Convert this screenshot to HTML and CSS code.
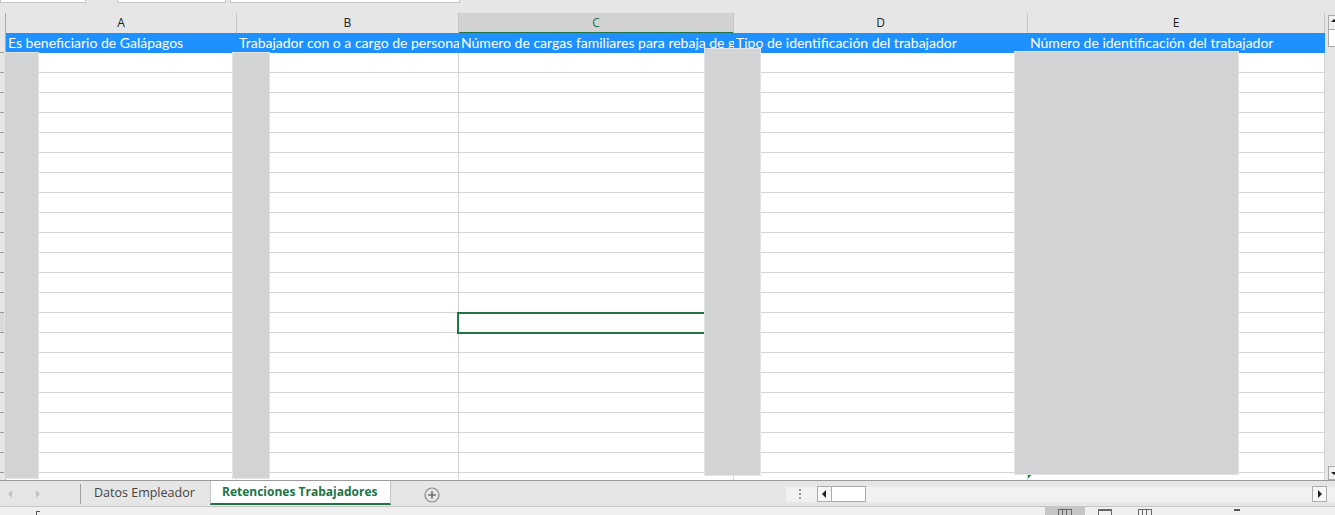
FILE: index.html
```html
<!DOCTYPE html>
<html lang="es">
<head>
<meta charset="utf-8">
<title>Retenciones Trabajadores</title>
<link rel="stylesheet" href="styles.css">
</head>
<body>
<div class="top">
  <span class="tb tb1"></span><span class="tb tb2"></span><span class="tb tb3"></span>
</div>
<div class="main">
  <div class="sheet">
    <div class="row hrow">
      <div class="corner"></div>
      <div class="ch">A</div>
      <div class="ch">B</div>
      <div class="ch sel">C</div>
      <div class="ch">D</div>
      <div class="ch">E</div>
    </div>
    <div class="row blue">
      <div class="rh"></div>
      <div class="c">Es beneficiario de Galápagos</div>
      <div class="c">Trabajador con o a cargo de persona con discapacidad</div>
      <div class="c">Número de cargas familiares para rebaja de gastos personales</div>
      <div class="c">Tipo de identificación del trabajador</div>
      <div class="c">Número de identificación del trabajador</div>
    </div>
    <div class="row"><div class="rh"></div><div class="c"></div><div class="c"></div><div class="c"></div><div class="c"></div><div class="c"></div></div>
    <div class="row"><div class="rh"></div><div class="c"></div><div class="c"></div><div class="c"></div><div class="c"></div><div class="c"></div></div>
    <div class="row"><div class="rh"></div><div class="c"></div><div class="c"></div><div class="c"></div><div class="c"></div><div class="c"></div></div>
    <div class="row"><div class="rh"></div><div class="c"></div><div class="c"></div><div class="c"></div><div class="c"></div><div class="c"></div></div>
    <div class="row"><div class="rh"></div><div class="c"></div><div class="c"></div><div class="c"></div><div class="c"></div><div class="c"></div></div>
    <div class="row"><div class="rh"></div><div class="c"></div><div class="c"></div><div class="c"></div><div class="c"></div><div class="c"></div></div>
    <div class="row"><div class="rh"></div><div class="c"></div><div class="c"></div><div class="c"></div><div class="c"></div><div class="c"></div></div>
    <div class="row"><div class="rh"></div><div class="c"></div><div class="c"></div><div class="c"></div><div class="c"></div><div class="c"></div></div>
    <div class="row"><div class="rh"></div><div class="c"></div><div class="c"></div><div class="c"></div><div class="c"></div><div class="c"></div></div>
    <div class="row"><div class="rh"></div><div class="c"></div><div class="c"></div><div class="c"></div><div class="c"></div><div class="c"></div></div>
    <div class="row"><div class="rh"></div><div class="c"></div><div class="c"></div><div class="c"></div><div class="c"></div><div class="c"></div></div>
    <div class="row"><div class="rh"></div><div class="c"></div><div class="c"></div><div class="c"></div><div class="c"></div><div class="c"></div></div>
    <div class="row"><div class="rh"></div><div class="c"></div><div class="c"></div><div class="c"></div><div class="c"></div><div class="c"></div></div>
    <div class="row"><div class="rh rsel"></div><div class="c"></div><div class="c"></div><div class="c"></div><div class="c"></div><div class="c"></div></div>
    <div class="row"><div class="rh"></div><div class="c"></div><div class="c"></div><div class="c"></div><div class="c"></div><div class="c"></div></div>
    <div class="row"><div class="rh"></div><div class="c"></div><div class="c"></div><div class="c"></div><div class="c"></div><div class="c"></div></div>
    <div class="row"><div class="rh"></div><div class="c"></div><div class="c"></div><div class="c"></div><div class="c"></div><div class="c"></div></div>
    <div class="row"><div class="rh"></div><div class="c"></div><div class="c"></div><div class="c"></div><div class="c"></div><div class="c"></div></div>
    <div class="row"><div class="rh"></div><div class="c"></div><div class="c"></div><div class="c"></div><div class="c"></div><div class="c"></div></div>
    <div class="row"><div class="rh"></div><div class="c"></div><div class="c"></div><div class="c"></div><div class="c"></div><div class="c"></div></div>
    <div class="row"><div class="rh"></div><div class="c"></div><div class="c"></div><div class="c"></div><div class="c"></div><div class="c"></div></div>
    <div class="row data">
      <div class="rh"></div>
      <div class="c">NO</div>
      <div class="c">SI</div>
      <div class="c num">0</div>
      <div class="c">C</div>
      <div class="c txtnum">0999994071</div>
    </div>
  </div>
  <div class="vscroll">
    <div class="vbtn up"></div>
    <div class="vthumb"></div>
    <div class="vspace"></div>
    <div class="vbtn down"></div>
  </div>
  <div class="selbox"></div>
  <div class="redact r1"></div>
  <div class="redact r2"></div>
  <div class="redact r3"></div>
  <div class="redact r4"></div>
</div>
<div class="tabbar">
  <div class="nav">
    <span class="tri left"></span>
    <span class="tri right"></span>
  </div>
  <div class="tab">Datos Empleador</div>
  <div class="tab active">Retenciones Trabajadores</div>
  <div class="plus">
    <svg width="16" height="16" viewBox="0 0 16 16"><circle cx="8" cy="8" r="7" fill="none" stroke="#8a8a8a" stroke-width="1.2"/><path d="M8 4.2v7.6M4.2 8h7.6" stroke="#6e6e6e" stroke-width="1.6"/></svg>
  </div>
  <div class="tabspace"></div>
  <div class="hzone">
    <div class="dots"><i></i><i></i><i></i></div>
    <div class="hscroll">
      <div class="hbtn"><span class="tri sleft"></span></div>
      <div class="hthumb"></div>
      <div class="htrack"></div>
      <div class="hbtn"><span class="tri sright"></span></div>
    </div>
  </div>
</div>
<div class="status">
  <span class="st-left"></span>
  <div class="st-space"></div>
  <div class="vbtns">
    <div class="viewbtn on"><span class="ico grid"></span></div>
    <div class="viewbtn"><span class="ico page"></span></div>
    <div class="viewbtn"><span class="ico grid"></span></div>
  </div>
  <div class="zoomminus"></div>
</div>
</body>
</html>
```

FILE: styles.css
```css
* { box-sizing: border-box; }
html, body { margin: 0; padding: 0; }
body {
  width: 1335px;
  height: 515px;
  overflow: hidden;
  background: #e6e6e6;
  font-family: "Lato", "Liberation Sans", sans-serif;
}

/* top strip */
.top {
  height: 13px;
  position: relative;
  display: flex;
  align-items: flex-start;
}
.tb {
  display: block;
  height: 3px;
  background: #fff;
  border: 1px solid #c6c6c6;
  border-top: none;
}
.tb1 { width: 86px; }
.tb2 { width: 109px; margin-left: 31px; }
.tb3 { width: 230px; margin-left: 4px; }

/* main grid area */
.main {
  position: relative;
  display: flex;
  height: 467px;
}
.sheet {
  width: 1325px;
  height: 467px;
  overflow: hidden;
  background: #fff;
}
.row {
  display: grid;
  grid-template-columns: 6px 231px 222px 275px 294px 297px;
  height: 20px;
}
.hrow { background: #e6e6e6; }
.corner {
  border-right: 1px solid #ababab;
  border-bottom: 1px solid #ababab;
  background: #e6e6e6;
}
.ch {
  border-right: 1px solid #c6c6c6;
  border-bottom: 1px solid #ababab;
  text-align: center;
  font-family: "Open Sans", "Liberation Sans", sans-serif;
  font-size: 12px;
  line-height: 19px;
  color: #222;
}
.ch.sel {
  background: #d2d2d2;
  color: #217346;
  border-bottom: 2px solid #217346;
}
.rh {
  background: #e6e6e6;
  border-right: 1px solid #ababab;
  border-bottom: 1px solid #9b9b9b;
}
.rh.rsel { background: #d9d9d9; }
.c {
  border-right: 1px solid #d4d4d4;
  border-bottom: 1px solid #d4d4d4;
  padding: 0 2px;
  font-size: 14px;
  line-height: 19px;
  white-space: nowrap;
  overflow: hidden;
  color: #000;
}
.blue .c {
  background: #1e90ff;
  color: #fff;
  border-right: none;
  border-bottom: 1px solid #1e90ff;
}
.data .c { line-height: 26px; }
.c.num { text-align: right; }
.c.txtnum {
  background: linear-gradient(135deg, #1e8e28 0 4px, transparent 4px);
}

/* vertical scrollbar */
.vscroll {
  width: 10px;
  height: 467px;
  display: flex;
  flex-direction: column;
  padding-top: 2px;
  padding-left: 3px;
  overflow: hidden;
  background: #e6e6e6;
}
.vbtn, .vthumb {
  width: 14px;
  flex: none;
  border: 1px solid #ababab;
  background: #f0f0f0;
  position: relative;
}
.vbtn { height: 15px; }
.vthumb { height: 17px; background: #fff; border-top: none; }
.vspace { flex: 1; }
.vbtn.down { height: 14px; }
.vbtn.up::after, .vbtn.down::after {
  content: "";
  position: absolute;
  left: 2px;
  border-left: 3px solid transparent;
  border-right: 3px solid transparent;
}
.vbtn.up::after { top: 3px; border-bottom: 3px solid #222; }
.vbtn.down::after { top: 5px; border-top: 3px solid #222; }

/* overlays */
.selbox {
  position: absolute;
  left: 457px;
  top: 299px;
  width: 277px;
  height: 22px;
  border: 2px solid #217346;
}
.redact {
  position: absolute;
  background: #d2d3d5;
  box-shadow: 0 0 0 1px #e3e4e6;
}
.r1 { left: 5px; top: 40px; width: 33px; height: 425px; }
.r2 { left: 233px; top: 40px; width: 36px; height: 425px; }
.r3 { left: 705px; top: 36px; width: 55px; height: 426px; }
.r4 { left: 1015px; top: 39px; width: 223px; height: 422px; }

/* tab bar */
.tabbar {
  display: flex;
  height: 27px;
  border-top: 1px solid #9b9b9b;
  border-bottom: 1px solid #c6c6c6;
  font-family: "Open Sans", "Liberation Sans", sans-serif;
}
.nav {
  width: 81px;
  position: relative;
  border-right: 1px solid #a0a0a0;
  margin: 3px 0 2px;
}
.tri {
  position: absolute;
  width: 0; height: 0;
  border-top: 4px solid transparent;
  border-bottom: 4px solid transparent;
}
.tri.left { left: 8px; top: 6px; border-right: 4px solid #c4c4c4; }
.tri.right { left: 36px; top: 6px; border-left: 4px solid #c4c4c4; }
.tab {
  padding: 0 13px 0 13px;
  font-size: 12.5px;
  line-height: 24px;
  color: #444;
  width: 129px;
  text-align: left;
  white-space: nowrap;
}
.tab.active {
  width: 181px;
  padding-left: 11px;
  padding-right: 0;
  background: #fff;
  color: #217346;
  font-weight: 700;
  font-size: 12px;
  border-left: 1px solid #c6c6c6;
  border-right: 1px solid #c6c6c6;
  border-bottom: 2px solid #217346;
  margin-bottom: 1px;
  line-height: 22px;
}
.plus {
  margin-left: 33px;
  padding-top: 5px;
}
.tabspace { flex: 1; }
.hzone {
  width: 549px;
  display: flex;
  align-items: center;
  background: linear-gradient(#e6e6e6 0 6px, #f1f1f1 6px 21px, #e6e6e6 21px);
}
.dots {
  width: 24px;
  display: flex;
  flex-direction: column;
  align-items: center;
  gap: 2px;
  margin-left: 2px;
}
.dots i {
  display: block;
  width: 2px;
  height: 2px;
  background: #9a9a9a;
}
.hscroll {
  display: flex;
  width: 510px;
  height: 16px;
  margin-left: 5px;
}
.hbtn {
  width: 15px;
  border: 1px solid #ababab;
  background: #f8f8f8;
  position: relative;
}
.hthumb {
  width: 34px;
  background: #fff;
  border: 1px solid #ababab;
  border-left: none;
}
.htrack { flex: 1; }
.tri.sleft { left: 4px; top: 3px; border-right: 4px solid #222; }
.tri.sright { left: 5px; top: 3px; border-left: 4px solid #222; }

/* status bar */
.status {
  display: flex;
  height: 9px;
  background: #f0f0f0;
  overflow: hidden;
}
.st-left {
  margin-left: 36px;
  margin-top: 4px;
  width: 4px;
  height: 5px;
  border-left: 1px solid #555;
  border-top: 1px solid #555;
}
.st-space { flex: 1; }
.vbtns { display: flex; margin-right: 69px; }
.viewbtn {
  width: 40px;
  height: 9px;
  display: flex;
  justify-content: center;
  padding-top: 2px;
}
.viewbtn.on { background: #c6c6c6; }
.ico {
  display: block;
  width: 14px;
  height: 10px;
  border: 1px solid #666;
}
.ico.grid {
  background: linear-gradient(90deg, transparent 3px, #666 3px 4px, transparent 4px 7px, #666 7px 8px, transparent 8px);
}
.ico.page { border-top-width: 2px; }
.zoomminus {
  width: 6px;
  height: 2px;
  background: #555;
  margin-top: 2px;
  margin-right: 95px;
}
```
